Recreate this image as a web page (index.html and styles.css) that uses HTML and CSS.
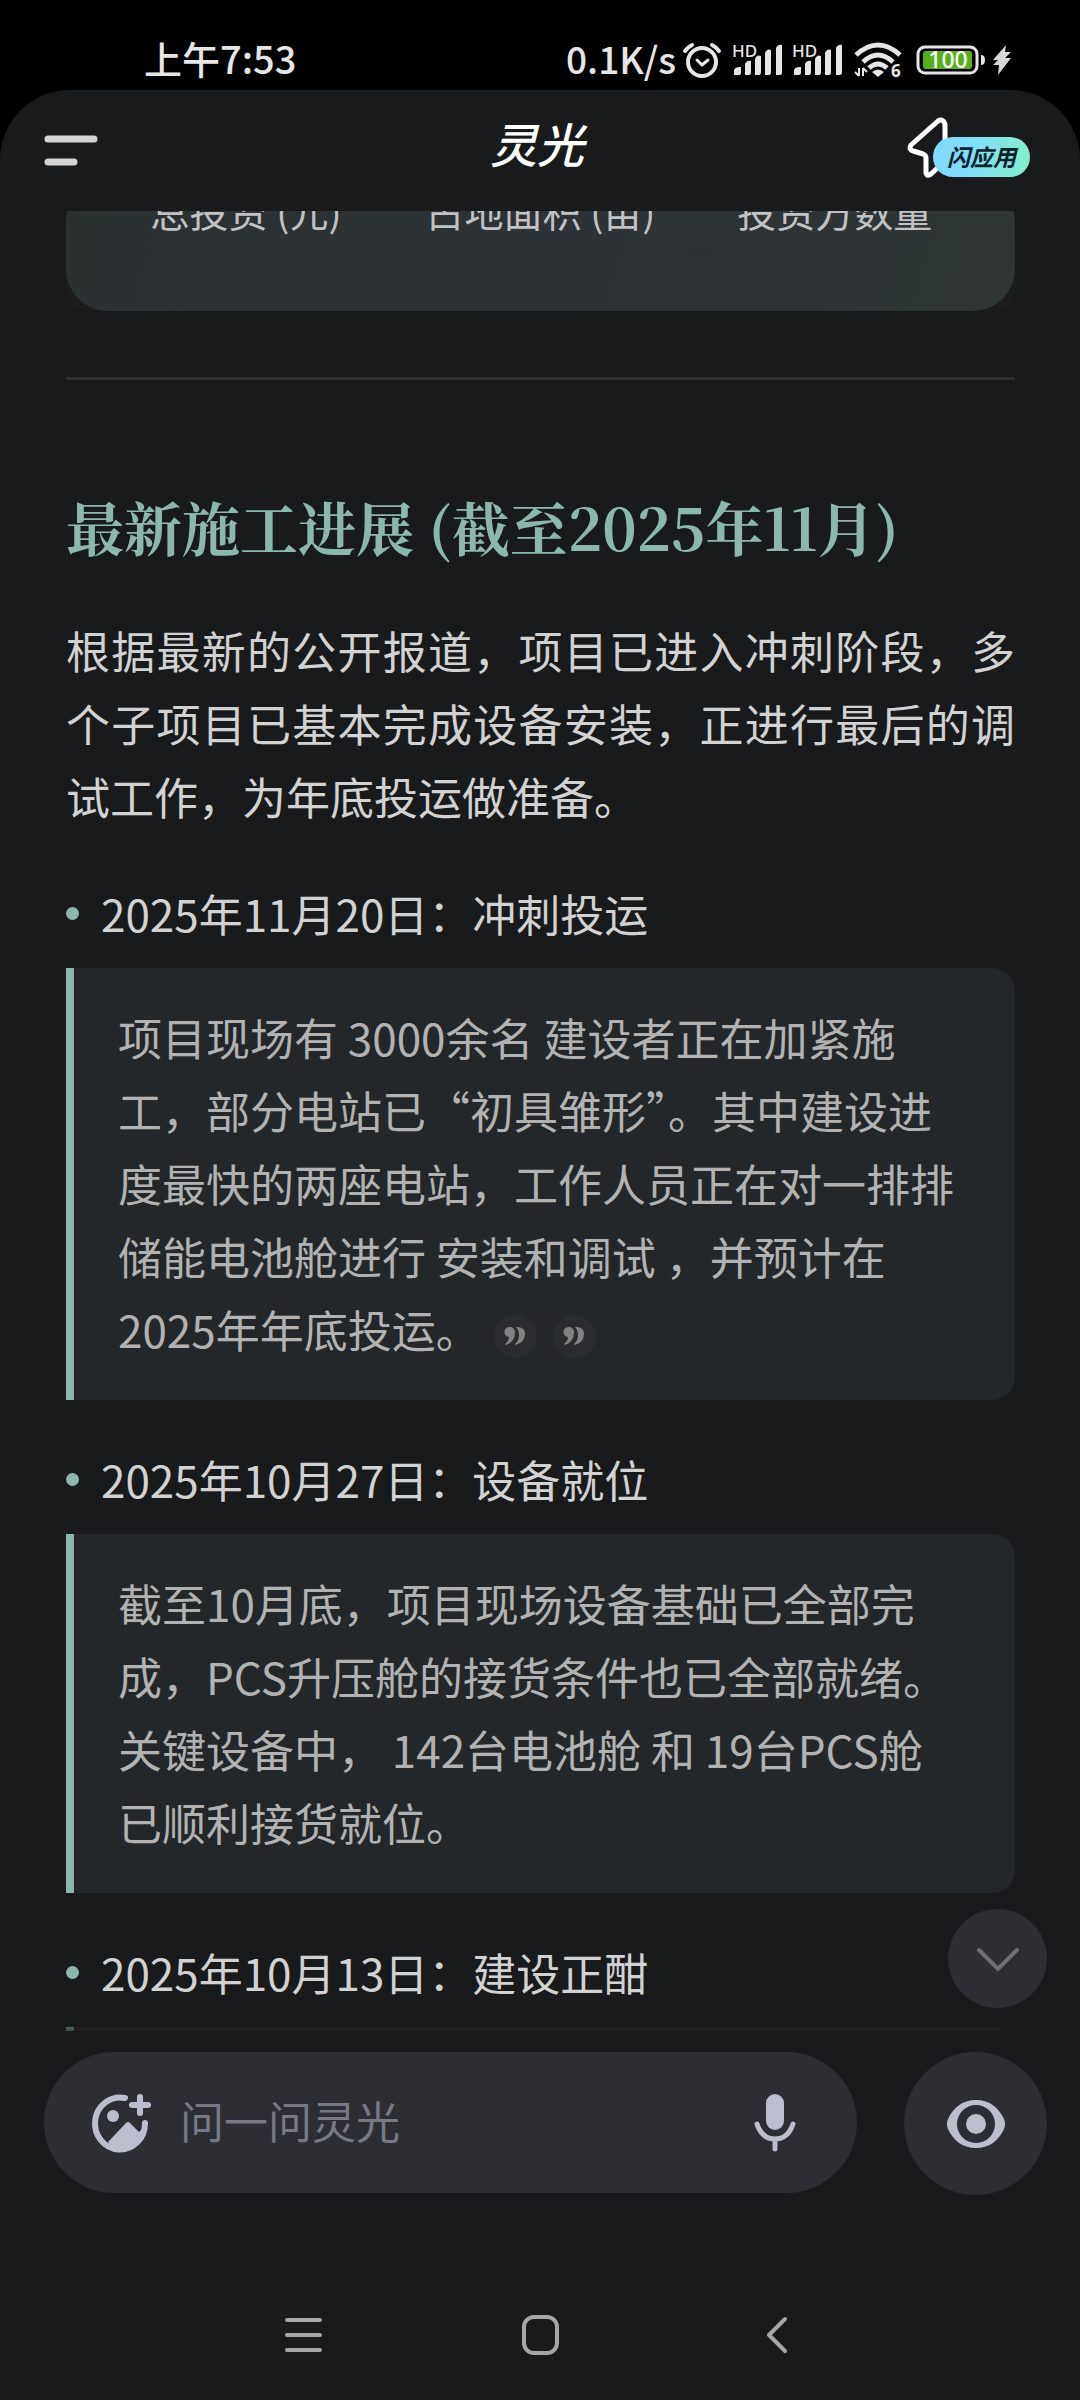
FILE: index.html
```html
<!DOCTYPE html>
<html lang="zh-CN">
<head>
<meta charset="utf-8">
<meta name="viewport" content="width=device-width, initial-scale=1">
<title>灵光</title>
<link rel="stylesheet" href="styles.css">
</head>
<body>
<div class="status-bar">
  <span class="status-time">上午7:53</span>
  <div class="status-icons">
    <span class="status-speed">0.1K/s</span>
    <svg class="status-alarm" width="40" height="36" viewBox="0 0 40 36" fill="none" stroke="#e6e6e6" stroke-width="4" stroke-linecap="round" stroke-linejoin="round">
      <circle cx="20" cy="20" r="14"/>
      <path d="M15 18l5 5 6-5" stroke-width="3"/>
      <path d="M3 9Q6 5 10 3M30 3Q34 5 37 9"/>
    </svg>
    <svg width="50" height="34" viewBox="0 0 50 34" fill="#e6e6e6">
      <text class="status-hd" x="0" y="14">HD</text>
      <path d="M2 32v-4q0-4 6-4h1v6q0 2-2 2zM13 32V21q2-4 6-3v11q0 3-2 3zM23 32V16q2-5 6-3v16q0 3-2 3zM33 32V10q2-5 6-3v22q0 3-2 3zM44 32V5q2-4 6-3v27q0 3-2 3z"/>
    </svg>
    <svg width="50" height="34" viewBox="0 0 50 34" fill="#e6e6e6">
      <text class="status-hd" x="0" y="14">HD</text>
      <path d="M2 32v-4q0-4 6-4h1v6q0 2-2 2zM13 32V21q2-4 6-3v11q0 3-2 3zM23 32V16q2-5 6-3v16q0 3-2 3zM33 32V10q2-5 6-3v22q0 3-2 3zM44 32V5q2-4 6-3v27q0 3-2 3z"/>
    </svg>
    <svg class="status-wifi" width="48" height="36" viewBox="0 0 48 36" fill="none" stroke="#e6e6e6" stroke-width="5">
      <path d="M2 13Q24-7 46 13M9 20Q24 6 39 20M15 26Q24 18 33 26"/>
      <path d="M24 35l-6-5q6-5 12 0z" fill="#e6e6e6" stroke="none"/>
      <path d="M5 26v8M1 30l4 4M9 34v-8M9 26l4 4" stroke-width="2"/>
      <text class="status-six" x="37" y="35" fill="#e6e6e6" stroke="none">6</text>
    </svg>
    <svg class="status-battery" width="70" height="30" viewBox="0 0 70 30">
      <rect x="2" y="2" width="59" height="26" rx="7" fill="none" stroke="#e6e6e6" stroke-width="3"/>
      <path d="M65 10q4 0 4 5t-4 5z" fill="#e6e6e6"/>
      <rect x="7" y="6" width="49" height="18" rx="3" fill="#55b01c"/>
      <text class="status-level" x="32" y="23" text-anchor="middle">100</text>
    </svg>
    <svg class="status-bolt" width="20" height="30" viewBox="0 0 20 30" fill="#d8d8d8">
      <path d="M14 0L1 15h5l-5 5h6l-1 10L19 13h-6l6-6h-6z"/>
    </svg>
  </div>
</div>

<div class="app">
  <header class="header">
    <button class="icon-button" aria-label="菜单">
      <svg width="56" height="32" viewBox="0 0 56 32" fill="none" stroke="#d4d4d4" stroke-width="7" stroke-linecap="round">
        <path d="M4 4h46M4 27h26"/>
      </svg>
    </button>
    <h1 class="title">灵光</h1>
    <button class="flash" aria-label="闪应用">
      <svg class="flash-bolt" width="42" height="62" viewBox="0 0 42 62" fill="none" stroke="#fff" stroke-width="5" stroke-linejoin="round">
        <path d="M31 4L4 28Q1 32 6 34L16 37Q19 38 19 41V56Q20 60 24 57L38 44V7Q36 1 31 4z"/>
      </svg>
      <span class="flash-label">闪应用</span>
    </button>
  </header>

  <div class="stage">
    <main class="content">
      <div class="stats-frame">
        <div class="stats">
          <span>总投资 (元)</span>
          <span>占地面积 (亩)</span>
          <span>投资方数量</span>
        </div>
      </div>
      <hr class="rule">
      <h2 class="heading">最新施工进展 (截至2025年11月)</h2>
      <p class="lead">根据最新的公开报道，项目已进入冲刺阶段，多个子项目已基本完成设备安装，正进行最后的调试工作，为年底投运做准备。</p>
      <ul class="timeline">
        <li class="entry">
          <h3 class="entry-title">2025年11月20日：冲刺投运</h3>
          <blockquote class="quote">项目现场有 3000余名 建设者正在加紧施工，部分电站已“初具雏形”。其中建设进度最快的两座电站，工作人员正在对一排排储能电池舱进行 安装和调试 ，并预计在2025年年底投运。<span class="cites"><button class="cite" aria-label="引用 1"><svg width="20" height="18" viewBox="0 0 20 18"><path d="M5 0a5 5 0 0 1 5 5q0 10-9 13l-1-1q4-3 4-7a5 5 0 0 1 1-10zM12 0q8 0 8 7 0 8-9 11l-1-1q4-3 4-9 0-5-3-8z"/></svg></button><button class="cite" aria-label="引用 2"><svg width="20" height="18" viewBox="0 0 20 18"><path d="M5 0a5 5 0 0 1 5 5q0 10-9 13l-1-1q4-3 4-7a5 5 0 0 1 1-10zM12 0q8 0 8 7 0 8-9 11l-1-1q4-3 4-9 0-5-3-8z"/></svg></button></span></blockquote>
        </li>
        <li class="entry">
          <h3 class="entry-title">2025年10月27日：设备就位</h3>
          <blockquote class="quote">截至10月底，项目现场设备基础已全部完成，PCS升压舱的接货条件也已全部就绪。关键设备中， 142台电池舱 和 19台PCS舱已顺利接货就位。</blockquote>
        </li>
        <li class="entry">
          <h3 class="entry-title">2025年10月13日：建设正酣</h3>
          <blockquote class="quote"></blockquote>
        </li>
      </ul>
    </main>
    <button class="scroll-down" aria-label="滚动到底部">
      <svg width="42" height="24" viewBox="0 0 42 24" fill="none" stroke="#6f7073" stroke-width="4" stroke-linecap="round"><path d="M2 3l19 19L40 3"/></svg>
    </button>
  </div>

  <form class="composer">
    <div class="field">
      <button class="icon-button" type="button" aria-label="添加图片">
        <svg width="60" height="60" viewBox="0 0 60 60" fill="none" stroke="#bbbfcd" stroke-width="6" stroke-linecap="round">
          <path d="M33 5A25 26 0 1 0 53 30"/>
          <path d="M48 4v16M40 12h16"/>
          <circle cx="21" cy="23" r="6" fill="#bbbfcd" stroke="none"/>
          <path d="M16 49L34 30q2-2 4 0l9 9 5-5q-3 23-24 23-7 0-12-8z" fill="#bbbfcd" stroke="none"/>
        </svg>
      </button>
      <input class="ask" type="text" placeholder="问一问灵光" aria-label="问一问灵光">
      <button class="icon-button" type="button" aria-label="语音输入">
        <svg width="42" height="60" viewBox="0 0 42 60" fill="none" stroke="#bbbfcd" stroke-width="5" stroke-linecap="round">
          <rect x="12" y="1" width="18" height="36" rx="9" fill="#bbbfcd" stroke="none"/>
          <path d="M3 31Q8 46 21 46T39 31M21 47v9"/>
        </svg>
      </button>
    </div>
    <button class="vision" type="button" aria-label="视觉">
      <svg width="60" height="50" viewBox="0 0 60 50" fill="#bbbfcd">
        <path fill-rule="evenodd" d="M30 1C44 1 53 9 58 20Q60 25 58 30C53 41 44 49 30 49S7 41 2 30Q0 25 2 20C7 9 16 1 30 1zM30 6a19 19 0 1 0 0 38 19 19 0 1 0 0-38z"/>
        <circle cx="30" cy="25" r="10"/>
      </svg>
    </button>
  </form>

  <nav class="system-nav">
    <button class="icon-button" aria-label="最近任务">
      <svg width="37" height="40" viewBox="0 0 37 40" fill="none" stroke="#a6a6a7" stroke-width="4" stroke-linecap="round"><path d="M2 5h33M2 20h33M2 35h33"/></svg>
    </button>
    <button class="icon-button" aria-label="主屏幕">
      <svg width="37" height="40" viewBox="0 0 37 40" fill="none" stroke="#a6a6a7" stroke-width="4"><rect x="2" y="2" width="33" height="36" rx="10"/></svg>
    </button>
    <button class="icon-button" aria-label="返回">
      <svg width="37" height="40" viewBox="0 0 37 40" fill="none" stroke="#a6a6a7" stroke-width="4" stroke-linecap="round" stroke-linejoin="round"><path d="M26 4L10 20l16 16"/></svg>
    </button>
  </nav>
</div>
</body>
</html>
```
FILE: styles.css
```css
* {
  box-sizing: border-box;
}

body {
  margin: 0;
  height: 100vh;
  display: flex;
  flex-direction: column;
  background: #000;
  color: #d2d2d2;
  font-family: "Noto Sans CJK SC", sans-serif;
}

button {
  padding: 0;
  border: 0;
  background: none;
  font-family: inherit;
}

svg {
  display: block;
  overflow: visible;
}

.icon-button {
  flex: none;
}

/* System status bar */
.status-bar {
  flex: none;
  height: 90px;
  padding: 30px 68px 0 144px;
  display: flex;
  align-items: center;
  justify-content: space-between;
  color: #e6e6e6;
  font-weight: 500;
  line-height: 56px;
}

.status-time,
.status-speed {
  padding-bottom: 4px;
}

.status-time {
  font-size: 38px;
}

.status-speed {
  font-size: 37px;
}

.status-icons {
  display: flex;
  align-items: center;
  gap: 10px;
}

.status-alarm {
  margin: 0 0 0 -4px;
}

.status-wifi {
  margin: 0 4px 0 2px;
}

.status-bolt {
  margin-left: -4px;
}

.status-hd {
  font: 500 17px "Noto Sans", sans-serif;
}

.status-six {
  font: 700 17px "Noto Sans", sans-serif;
}

.status-level {
  fill: #fff;
  font: 500 23px "Noto Sans", sans-serif;
}

/* App shell */
.app {
  flex: 1;
  min-height: 0;
  display: flex;
  flex-direction: column;
  background: #191a1c;
  border-radius: 70px 70px 0 0;
}

.header {
  flex: none;
  height: 121px;
  padding: 0 50px 0 44px;
  display: grid;
  grid-template-columns: 1fr auto 1fr;
  align-items: center;
}

.title {
  margin: 0;
  padding-bottom: 15px;
  color: #fff;
  font-size: 47px;
  font-style: italic;
  font-weight: 500;
  line-height: 72px;
}

.flash {
  justify-self: end;
  display: flex;
  align-items: center;
  padding-bottom: 5px;
}

.flash-label {
  position: relative;
  height: 40px;
  margin: 18px 0 0 -16px;
  padding: 0 14px;
  border-radius: 20px;
  background: linear-gradient(100deg, #80dbff 30%, #86eec8);
  color: #08222c;
  font-size: 23px;
  font-style: italic;
  font-weight: 700;
  line-height: 38px;
}

/* Scrolling answer */
.stage {
  position: relative;
  flex: 1;
  min-height: 0;
}

.content {
  height: 100%;
  padding: 0 65px 0 66px;
  overflow: hidden;
}

.content::after {
  content: "";
  position: absolute;
  inset: auto 0 0;
  height: 16px;
  background: linear-gradient(transparent, rgba(25, 26, 28, 0.7));
}

.stats-frame {
  margin-top: -30px;
  border-radius: 24px;
  background: #1d1d1f;
}

.stats {
  display: grid;
  grid-template-columns: repeat(3, 1fr);
  padding: 0 33px 72px;
  border-radius: 42px;
  background: linear-gradient(105deg, #2b3131, #2d3236 50%, #2f3635);
  color: #c2c2c4;
  font-size: 39px;
  line-height: 58px;
  text-align: center;
}

.rule {
  height: 3px;
  margin: 66px 0 0;
  border: 0;
  background: #2e2f31;
}

.heading {
  margin: 106px 0 48px;
  color: #8cb7ae;
  font-family: "Noto Serif CJK SC", "Noto Sans CJK SC", serif;
  font-size: 58px;
  font-weight: 700;
  line-height: 80px;
}

.lead {
  margin: 0 0 44px;
  font-size: 44px;
  line-height: 73px;
  text-align: justify;
}

.timeline {
  margin: 0;
  padding: 0;
  list-style: none;
}

.entry {
  margin-bottom: 43px;
}

.entry-title {
  display: flex;
  align-items: center;
  gap: 22px;
  margin: 0 0 18px;
  font-size: 44px;
  font-weight: 400;
  line-height: 73px;
}

.entry-title::before {
  content: "";
  width: 13px;
  height: 13px;
  border-radius: 50%;
  background: #8cb7ae;
}

.quote {
  margin: 0;
  padding: 33px 50px 34px 44px;
  border-left: 8px solid #8cb7ae;
  border-radius: 0 22px 22px 0;
  background: #232729;
  color: #b2b2b2;
  font-size: 44px;
  line-height: 73px;
}

.cites {
  display: inline-flex;
  gap: 16px;
  margin-left: 14px;
  vertical-align: middle;
}

.cite {
  width: 43px;
  height: 43px;
  display: grid;
  place-items: center;
  border-radius: 50%;
  background: #2c2c30;
  fill: #828282;
}

.scroll-down {
  position: absolute;
  right: 33px;
  bottom: 23px;
  width: 99px;
  height: 99px;
  display: grid;
  place-items: center;
  border-radius: 50%;
  background: #2d2e33;
}

/* Question box */
.composer {
  flex: none;
  display: flex;
  gap: 47px;
  margin: 21px 33px 75px 44px;
}

.field {
  flex: 1;
  min-width: 0;
  height: 141px;
  padding: 0 61px 0 48px;
  display: flex;
  align-items: center;
  border-radius: 71px;
  background: #2d2e33;
}

.ask {
  flex: 1;
  min-width: 0;
  margin: 0 24px 0 28px;
  padding: 0 0 6px;
  border: 0;
  outline: 0;
  background: none;
  color: #d2d2d2;
  font-family: inherit;
  font-size: 44px;
  line-height: 66px;
}

.ask::placeholder {
  color: #777984;
  opacity: 1;
}

.vision {
  flex: none;
  width: 143px;
  height: 143px;
  display: grid;
  place-items: center;
  border-radius: 50%;
  background: #2d2e33;
}

/* System navigation */
.system-nav {
  flex: none;
  height: 130px;
  display: flex;
  align-items: center;
  justify-content: center;
  gap: 200px;
}
```
